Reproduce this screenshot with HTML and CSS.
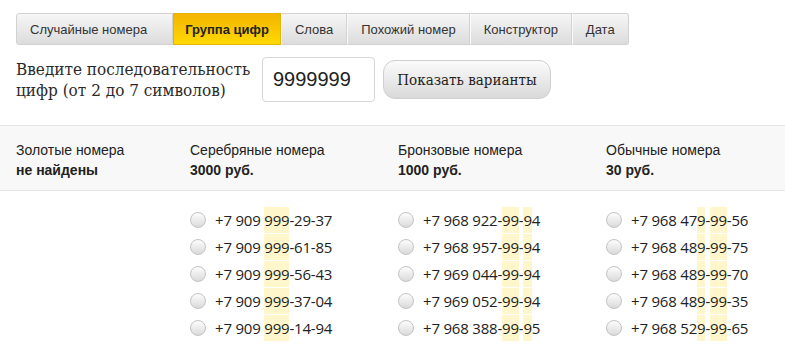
FILE: index.html
```html
<!DOCTYPE html>
<html lang="ru">
<head>
    <meta charset="UTF-8">
    <title>Подбор номера</title>
    <link rel="stylesheet" href="styles.css">
</head>
<body>
    <div class="wrap">
        <ul class="tabs">
            <li class="tab tab-first">Случайные номера</li>
            <li class="tab active">Группа цифр</li>
            <li class="tab">Слова</li>
            <li class="tab">Похожий номер</li>
            <li class="tab">Конструктор</li>
            <li class="tab">Дата</li>
        </ul>

        <div class="search">
            <label for="digits">Введите последовательность<br>цифр (от 2 до 7 символов)</label>
            <input type="text" id="digits" value="9999999">
            <button class="show-btn">Показать варианты</button>
        </div>
    </div>

    <div class="prices">
        <div class="col">Золотые номера<br><b>не найдены</b></div>
        <div class="col">Серебряные номера<br><b>3000 руб.</b></div>
        <div class="col">Бронзовые номера<br><b>1000 руб.</b></div>
        <div class="col">Обычные номера<br><b>30 руб.</b></div>
    </div>

    <div class="numbers">
        <div class="col"></div>
        <ul class="col list">
            <li><span class="radio"></span>+7 909 <span class="hl">999</span>-29-37</li>
            <li><span class="radio"></span>+7 909 <span class="hl">999</span>-61-85</li>
            <li><span class="radio"></span>+7 909 <span class="hl">999</span>-56-43</li>
            <li><span class="radio"></span>+7 909 <span class="hl">999</span>-37-04</li>
            <li><span class="radio"></span>+7 909 <span class="hl">999</span>-14-94</li>
        </ul>
        <ul class="col list">
            <li><span class="radio"></span>+7 968 922-<span class="hl">99</span>-<span class="hl">9</span>4</li>
            <li><span class="radio"></span>+7 968 957-<span class="hl">99</span>-<span class="hl">9</span>4</li>
            <li><span class="radio"></span>+7 969 044-<span class="hl">99</span>-<span class="hl">9</span>4</li>
            <li><span class="radio"></span>+7 969 052-<span class="hl">99</span>-<span class="hl">9</span>4</li>
            <li><span class="radio"></span>+7 968 388-<span class="hl">99</span>-<span class="hl">9</span>5</li>
        </ul>
        <ul class="col list">
            <li><span class="radio"></span>+7 968 47<span class="hl">9</span>-<span class="hl">99</span>-56</li>
            <li><span class="radio"></span>+7 968 48<span class="hl">9</span>-<span class="hl">99</span>-75</li>
            <li><span class="radio"></span>+7 968 48<span class="hl">9</span>-<span class="hl">99</span>-70</li>
            <li><span class="radio"></span>+7 968 48<span class="hl">9</span>-<span class="hl">99</span>-35</li>
            <li><span class="radio"></span>+7 968 52<span class="hl">9</span>-<span class="hl">99</span>-65</li>
        </ul>
    </div>
</body>
</html>
```

FILE: styles.css
```css
body {
    margin: 0;
    font-family: "Liberation Sans", Arial, sans-serif;
    font-size: 13px;
    color: #222;
    background: #fff;
}
.wrap {
    padding: 13px 16px 0;
}
.tabs {
    display: flex;
    margin: 0;
    padding: 0;
    list-style: none;
}
.tab {
    height: 32px;
    line-height: 32px;
    padding: 0 13px;
    color: #333;
    background: linear-gradient(#f6f6f6, #dcdcdc);
    border: 1px solid #d2d2d2;
    border-left-color: #fafafa;
    box-sizing: border-box;
}
.tab-first {
    padding-right: 25px;
    border-left-color: #d2d2d2;
    border-radius: 3px 0 0 3px;
}
.tab:last-child {
    border-radius: 0 3px 3px 0;
}
.tab.active {
    padding: 0 11px;
    font-weight: bold;
    color: #222;
    background: linear-gradient(#f4b400, #ffd900);
    border-color: #e5b300;
}
.search {
    display: flex;
    align-items: center;
    margin-top: 12px;
    height: 45px;
}
.search label {
    font-family: "DejaVu Serif Condensed", "DejaVu Serif", serif;
    font-stretch: condensed;
    font-size: 17px;
    line-height: 21px;
    color: #2a2a2a;
    width: 246px;
    white-space: nowrap;
}
.search input {
    width: 113px;
    height: 45px;
    box-sizing: border-box;
    border: 1px solid #d6d6d6;
    border-radius: 4px;
    padding: 0 10px;
    font-family: "Liberation Sans", Arial, sans-serif;
    font-size: 20px;
    color: #222;
}
.show-btn {
    margin-left: 8px;
    width: 168px;
    height: 39px;
    padding: 0;
    border: 1px solid #cfcfcf;
    border-radius: 12px;
    background: linear-gradient(#fbfbfb, #d9d9d9);
    font-family: "DejaVu Serif Condensed", "DejaVu Serif", serif;
    font-stretch: condensed;
    font-size: 15px;
    color: #222;
    white-space: nowrap;
    cursor: pointer;
}
.prices {
    display: grid;
    grid-template-columns: 174px 208px 208px 1fr;
    margin-top: 23px;
    padding: 14px 16px 0;
    height: 66px;
    box-sizing: border-box;
    background: #f8f8f8;
    border-top: 1px solid #e6e6e6;
    border-bottom: 1px solid #e6e6e6;
    font-size: 14px;
    line-height: 20px;
    color: #222;
}
.numbers {
    display: grid;
    grid-template-columns: 174px 208px 208px 1fr;
    padding: 16px 16px 0;
}
.list {
    margin: 0;
    padding: 0;
    list-style: none;
}
.list li {
    display: flex;
    align-items: center;
    height: 26px;
    margin-bottom: 1px;
    font-family: "Open Sans", sans-serif;
    font-size: 15px;
    letter-spacing: -0.2px;
    color: #222;
    white-space: pre;
}
.radio {
    width: 14px;
    height: 14px;
    border: 1px solid #c3c3c3;
    border-radius: 50%;
    background: linear-gradient(#fdfdfd, #dadada);
    margin-right: 9px;
    flex: none;
}
.hl {
    background: #fff6cc;
    align-self: stretch;
    line-height: 26px;
}
```
